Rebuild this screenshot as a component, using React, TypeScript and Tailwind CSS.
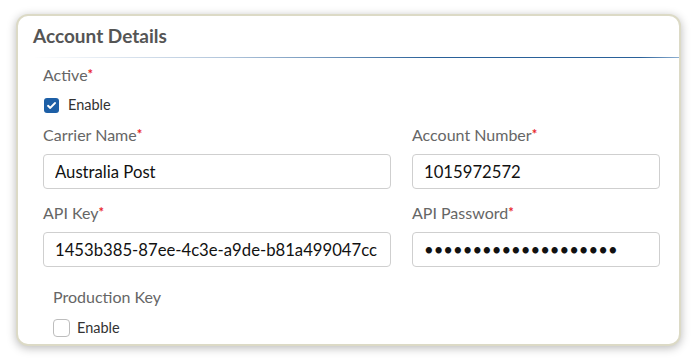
import React from 'react';

const Req = () => <span className="text-[#e8262b] text-[13px] align-top relative -top-[1px] font-bold">*</span>;

const Label = ({ text, required = true }: { text: string; required?: boolean }) => (
  <div className="text-[16px] leading-[20px] text-[#666]">
    {text}
    {required && <Req />}
  </div>
);

const TextBox = ({ value, type = 'text' }: { value: string; type?: string }) => (
  <input
    type={type}
    readOnly
    value={value}
    className="w-full h-[35px] rounded-[4px] border border-[#cfcfcf] bg-white pl-[11px] pr-[6px] text-[16.7px] text-[#111] outline-none"
  />
);

export default function App() {
  return (
    <div className="min-h-screen bg-white pt-[14px] pl-[16px] font-['Lato','Liberation_Sans',sans-serif]">
      <div className="w-[665px] h-[332px] rounded-[12px] border-2 border-[#dcdac6] bg-white shadow-[0_2px_10px_rgba(0,0,0,0.28)]">
        {/* header */}
        <div className="pt-[8px] pl-[15px]">
          <h3 className="text-[19px] leading-[24px] font-bold text-[#555]">Account Details</h3>
          <div className="mt-[9px] h-px bg-[linear-gradient(to_right,rgba(60,110,165,0)_0%,rgba(60,110,165,0.4)_30%,#2a6199_62%,#2a6199_94%,#8fb0d2_100%)]" />
        </div>

        <div className="pl-[25px] pt-[7px]">
          <Label text="Active" />
          <label className="mt-[10px] flex items-center h-[20px]">
            <span className="ml-[1px] w-[15px] h-[15px] rounded-[3px] bg-[#1d5fa6] flex items-center justify-center">
              <svg viewBox="0 0 16 16" className="w-[11px] h-[11px]" fill="none" stroke="white" strokeWidth="3" strokeLinecap="round" strokeLinejoin="round">
                <path d="M3 8.5l3.2 3L13 4.5" />
              </svg>
            </span>
            <span className="ml-[9px] text-[14.5px] text-[#333]">Enable</span>
          </label>

          <div className="mt-[10px] grid grid-cols-[348px_248px] gap-x-[21px]">
            <div>
              <Label text="Carrier Name" />
              <div className="mt-[9px]"><TextBox value="Australia Post" /></div>
            </div>
            <div>
              <Label text="Account Number" />
              <div className="mt-[9px]"><TextBox value="1015972572" /></div>
            </div>
            <div className="mt-[14px]">
              <Label text="API Key" />
              <div className="mt-[9px]"><TextBox value="1453b385-87ee-4c3e-a9de-b81a499047cc" /></div>
            </div>
            <div className="mt-[14px]">
              <Label text="API Password" />
              <div className="mt-[9px]"><TextBox type="password" value="abcdefghijklmnopqrst" /></div>
            </div>
          </div>

          <div className="mt-[20px] pl-[10px]">
            <Label text="Production Key" required={false} />
            <label className="mt-[12px] flex items-center h-[18px]">
              <span className="w-[17px] h-[18px] rounded-[4px] border border-[#bdbdbd] bg-white" />
              <span className="ml-[7px] text-[14.5px] text-[#333]">Enable</span>
            </label>
          </div>
        </div>
      </div>
    </div>
  );
}
